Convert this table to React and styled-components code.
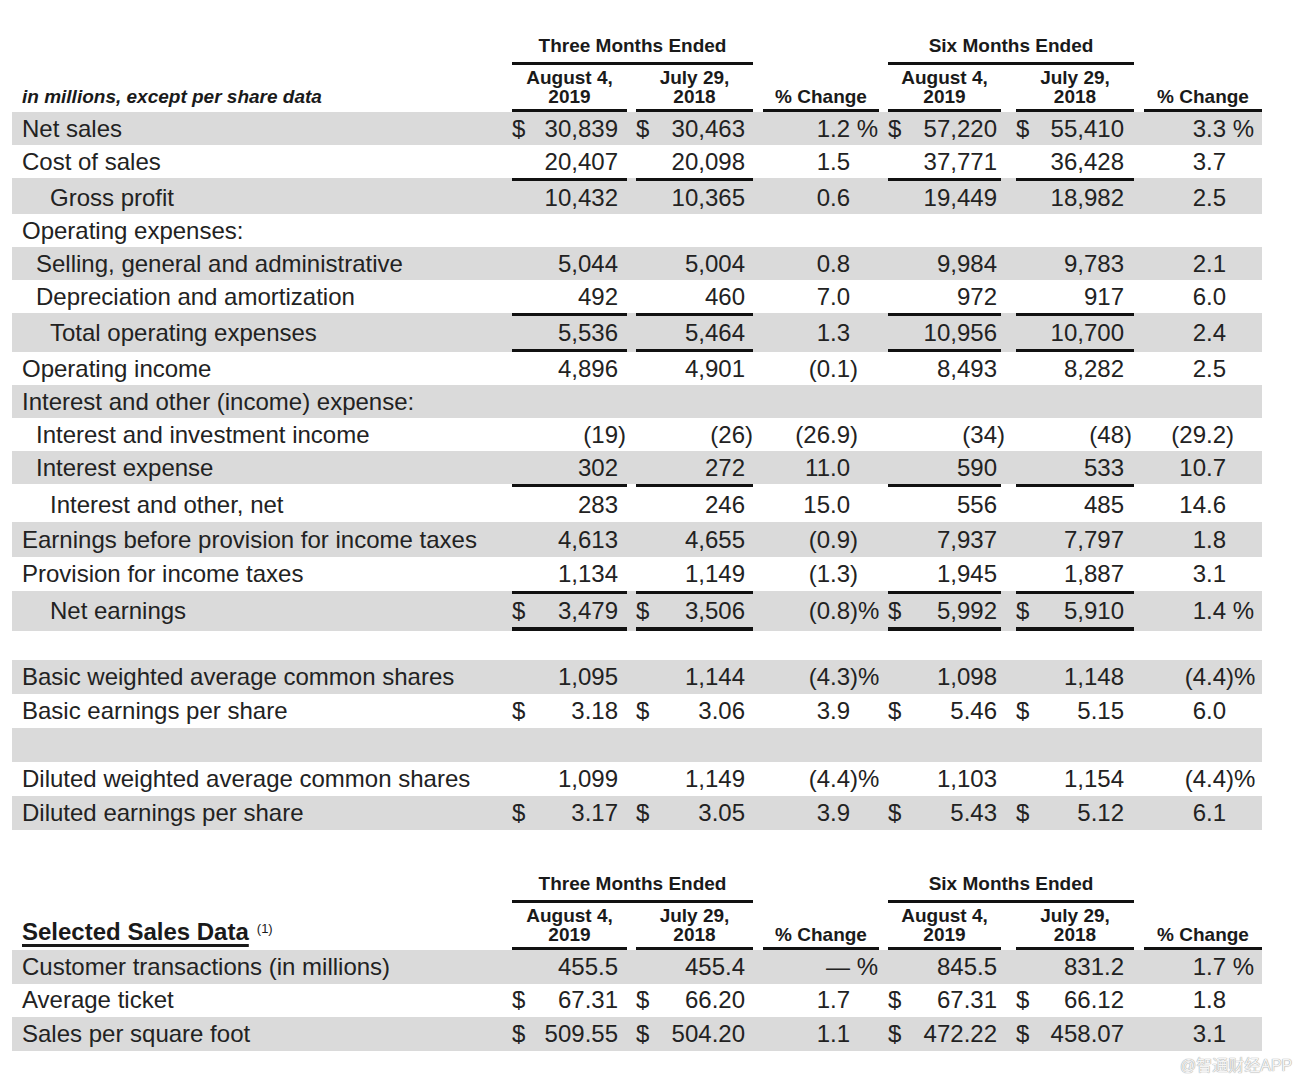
import React from 'react';
import styled, { createGlobalStyle } from 'styled-components';

const GlobalStyle = createGlobalStyle`
  body {
    margin: 0;
    background: #fff;
    font-family: "Liberation Sans", Arial, Helvetica, sans-serif;
    color: #222;
  }
`;

// column geometry: grid cell, rule end (mr), space kept right of the number (sw)
const cols = [
  { mr: 9, sw: 9 },
  { mr: 10, sw: 8 },
  { mr: 9, sw: 29 },
  { mr: 15, sw: 4 },
  { mr: 10, sw: 10 },
  { mr: 0, sw: 36 },
];
const ruled = [0, 1, 3, 4];
const grid = '500px 124px 127px 125px 128px 128px 118px';

const income = [
  { label: 'Net sales', shade: true, vals: ['$ 30,839', '$ 30,463', '1.2 %', '$ 57,220', '$ 55,410', '3.3 %'] },
  { label: 'Cost of sales', vals: ['20,407', '20,098', '1.5', '37,771', '36,428', '3.7'] },
  { label: 'Gross profit', indent: 2, shade: true, top: 3, vals: ['10,432', '10,365', '0.6', '19,449', '18,982', '2.5'] },
  { label: 'Operating expenses:' },
  { label: 'Selling, general and administrative', indent: 1, shade: true, vals: ['5,044', '5,004', '0.8', '9,984', '9,783', '2.1'] },
  { label: 'Depreciation and amortization', indent: 1, vals: ['492', '460', '7.0', '972', '917', '6.0'] },
  { label: 'Total operating expenses', indent: 2, shade: true, top: 3, bottom: 3, vals: ['5,536', '5,464', '1.3', '10,956', '10,700', '2.4'] },
  { label: 'Operating income', vals: ['4,896', '4,901', '(0.1)', '8,493', '8,282', '2.5'] },
  { label: 'Interest and other (income) expense:', shade: true },
  { label: 'Interest and investment income', indent: 1, vals: ['(19)', '(26)', '(26.9)', '(34)', '(48)', '(29.2)'] },
  { label: 'Interest expense', indent: 1, shade: true, vals: ['302', '272', '11.0', '590', '533', '10.7'] },
  { label: 'Interest and other, net', indent: 2, top: 3, h: 35, vals: ['283', '246', '15.0', '556', '485', '14.6'] },
  { label: 'Earnings before provision for income taxes', shade: true, h: 35, vals: ['4,613', '4,655', '(0.9)', '7,937', '7,797', '1.8'] },
  { label: 'Provision for income taxes', h: 34, vals: ['1,134', '1,149', '(1.3)', '1,945', '1,887', '3.1'] },
  { label: 'Net earnings', indent: 2, shade: true, top: 3, bottom: 4, h: 33, vals: ['$ 3,479', '$ 3,506', '(0.8)%', '$ 5,992', '$ 5,910', '1.4 %'] },
];

const shares = [
  { label: 'Basic weighted average common shares', shade: true, vals: ['1,095', '1,144', '(4.3)%', '1,098', '1,148', '(4.4)%'] },
  { label: 'Basic earnings per share', vals: ['$ 3.18', '$ 3.06', '3.9', '$ 5.46', '$ 5.15', '6.0'] },
  { label: '', shade: true },
  { label: 'Diluted weighted average common shares', vals: ['1,099', '1,149', '(4.4)%', '1,103', '1,154', '(4.4)%'] },
  { label: 'Diluted earnings per share', shade: true, vals: ['$ 3.17', '$ 3.05', '3.9', '$ 5.43', '$ 5.12', '6.1'] },
];

const sales = [
  { label: 'Customer transactions (in millions)', shade: true, vals: ['455.5', '455.4', '— %', '845.5', '831.2', '1.7 %'] },
  { label: 'Average ticket', vals: ['$ 67.31', '$ 66.20', '1.7', '$ 67.31', '$ 66.12', '1.8'] },
  { label: 'Sales per square foot', shade: true, vals: ['$ 509.55', '$ 504.20', '1.1', '$ 472.22', '$ 458.07', '3.1'] },
];

const parse = (raw) => {
  let s = raw;
  let d = '';
  if (s.startsWith('$')) {
    d = '$';
    s = s.slice(1).trim();
  }
  const m = s.match(/^(.*?)(\)%|\)| %)?$/);
  return { d, n: m[1], sx: m[2] || '' };
};

const Page = styled.div`
  position: relative;
  width: 1298px;
  min-height: 1082px;
  padding-top: 36px;
  box-sizing: border-box;
`;

const Table = styled.section`
  margin-left: 12px;
  width: 1250px;
  margin-top: ${(p) => p.$gap || 0}px;
`;

const GroupRow = styled.div`
  display: grid;
  grid-template-columns: ${grid};
`;

const GroupHead = styled.div`
  grid-column: ${(p) => p.$span};
  margin-right: ${(p) => p.$mr}px;
  padding-bottom: 6px;
  border-bottom: 3px solid #111;
  font-size: 19px;
  line-height: 20px;
  font-weight: bold;
  text-align: center;
  color: #1a1a1a;
`;

const SubRow = styled.div`
  display: grid;
  grid-template-columns: ${grid};
  align-items: end;
`;

const SubHead = styled.div`
  margin-right: ${(p) => p.$mr}px;
  padding: 3px 0 3px;
  border-bottom: 3px solid #111;
  font-size: 19px;
  line-height: 19px;
  font-weight: bold;
  text-align: center;
  color: #1a1a1a;
  white-space: nowrap;
`;

const Caption = styled.div`
  padding: 0 0 6px 10px;
  font-size: 19px;
  line-height: 19px;
  font-weight: bold;
  font-style: italic;
  color: #1a1a1a;
  white-space: nowrap;
`;

const SalesTitle = styled.div`
  padding: 0 0 6px 10px;
  font-size: 24px;
  line-height: 24px;
  font-weight: bold;
  color: #1a1a1a;
  white-space: nowrap;

  span {
    text-decoration: underline;
    text-decoration-thickness: 3px;
    text-underline-offset: 4px;
  }

  sup {
    font-size: 13px;
    font-weight: normal;
    margin-left: 8px;
    vertical-align: 7px;
  }
`;

const Row = styled.div`
  display: grid;
  grid-template-columns: ${grid};
  background: ${(p) => (p.$shade ? '#dadada' : 'transparent')};
`;

const Cell = styled.div`
  display: flex;
  align-items: center;
  height: ${(p) => p.$h}px;
  margin-right: ${(p) => p.$mr || 0}px;
  border-top: ${(p) => (p.$top ? `${p.$top}px solid ${p.$rule ? '#111' : 'transparent'}` : 'none')};
  border-bottom: ${(p) => (p.$bottom ? `${p.$bottom}px solid ${p.$rule ? '#111' : 'transparent'}` : 'none')};
  font-size: 24px;
  white-space: nowrap;
`;

const Label = styled(Cell)`
  padding-left: ${(p) => 10 + (p.$indent || 0) * 14}px;
`;

const Dollar = styled.span`
  flex: none;
`;

const Num = styled.span`
  flex: 1;
  text-align: right;
`;

const Suffix = styled.span`
  width: ${(p) => p.$w}px;
  flex: none;
  white-space: pre;
  overflow: visible;
`;

const Watermark = styled.div`
  position: absolute;
  top: 1052px;
  left: 1180px;
  font-family: "Liberation Sans", "Noto Sans CJK SC", sans-serif;
  font-size: 16px;
  color: #f4f4f4;
  text-shadow: 0 0 1px #a0a0a0, 0 0 1px #a0a0a0;
  white-space: nowrap;
`;

const Spacer = styled.div`
  height: ${(p) => p.$h}px;
`;

const Header = ({ title }) => (
  <>
    <GroupRow>
      <GroupHead $span="2 / 4" $mr={cols[1].mr}>Three Months Ended</GroupHead>
      <GroupHead $span="5 / 7" $mr={cols[4].mr}>Six Months Ended</GroupHead>
    </GroupRow>
    <SubRow>
      {title}
      <SubHead $mr={cols[0].mr}>August 4,<br />2019</SubHead>
      <SubHead $mr={cols[1].mr}>July 29,<br />2018</SubHead>
      <SubHead $mr={cols[2].mr}>% Change</SubHead>
      <SubHead $mr={cols[3].mr}>August 4,<br />2019</SubHead>
      <SubHead $mr={cols[4].mr}>July 29,<br />2018</SubHead>
      <SubHead $mr={cols[5].mr}>% Change</SubHead>
    </SubRow>
  </>
);

const DataRow = ({ row, h }) => {
  const height = row.h || h;
  return (
    <Row $shade={row.shade}>
      <Label $h={height} $indent={row.indent} $top={row.top} $bottom={row.bottom}>
        {row.label}
      </Label>
      {cols.map((c, i) => {
        const v = row.vals ? parse(row.vals[i]) : null;
        return (
          <Cell
            key={i}
            $h={height}
            $mr={c.mr}
            $top={row.top}
            $bottom={row.bottom}
            $rule={ruled.includes(i)}
          >
            {v && (
              <>
                <Dollar>{v.d}</Dollar>
                <Num>{v.n}</Num>
                <Suffix $w={c.sw}>{v.sx}</Suffix>
              </>
            )}
          </Cell>
        );
      })}
    </Row>
  );
};

export default function App() {
  return (
    <Page>
      <GlobalStyle />
      <Table>
        <Header title={<Caption>in millions, except per share data</Caption>} />
        {income.map((r) => (
          <DataRow key={r.label} row={r} h={33} />
        ))}
        <Spacer $h={29} />
        {shares.map((r, i) => (
          <DataRow key={i} row={r} h={34} />
        ))}
      </Table>
      <Table $gap={44}>
        <Header
          title={
            <SalesTitle>
              <span>Selected Sales Data</span>
              <sup>(1)</sup>
            </SalesTitle>
          }
        />
        {sales.map((r) => (
          <DataRow key={r.label} row={r} h={33.5} />
        ))}
      </Table>
      <Watermark>@智通财经APP</Watermark>
    </Page>
  );
}
